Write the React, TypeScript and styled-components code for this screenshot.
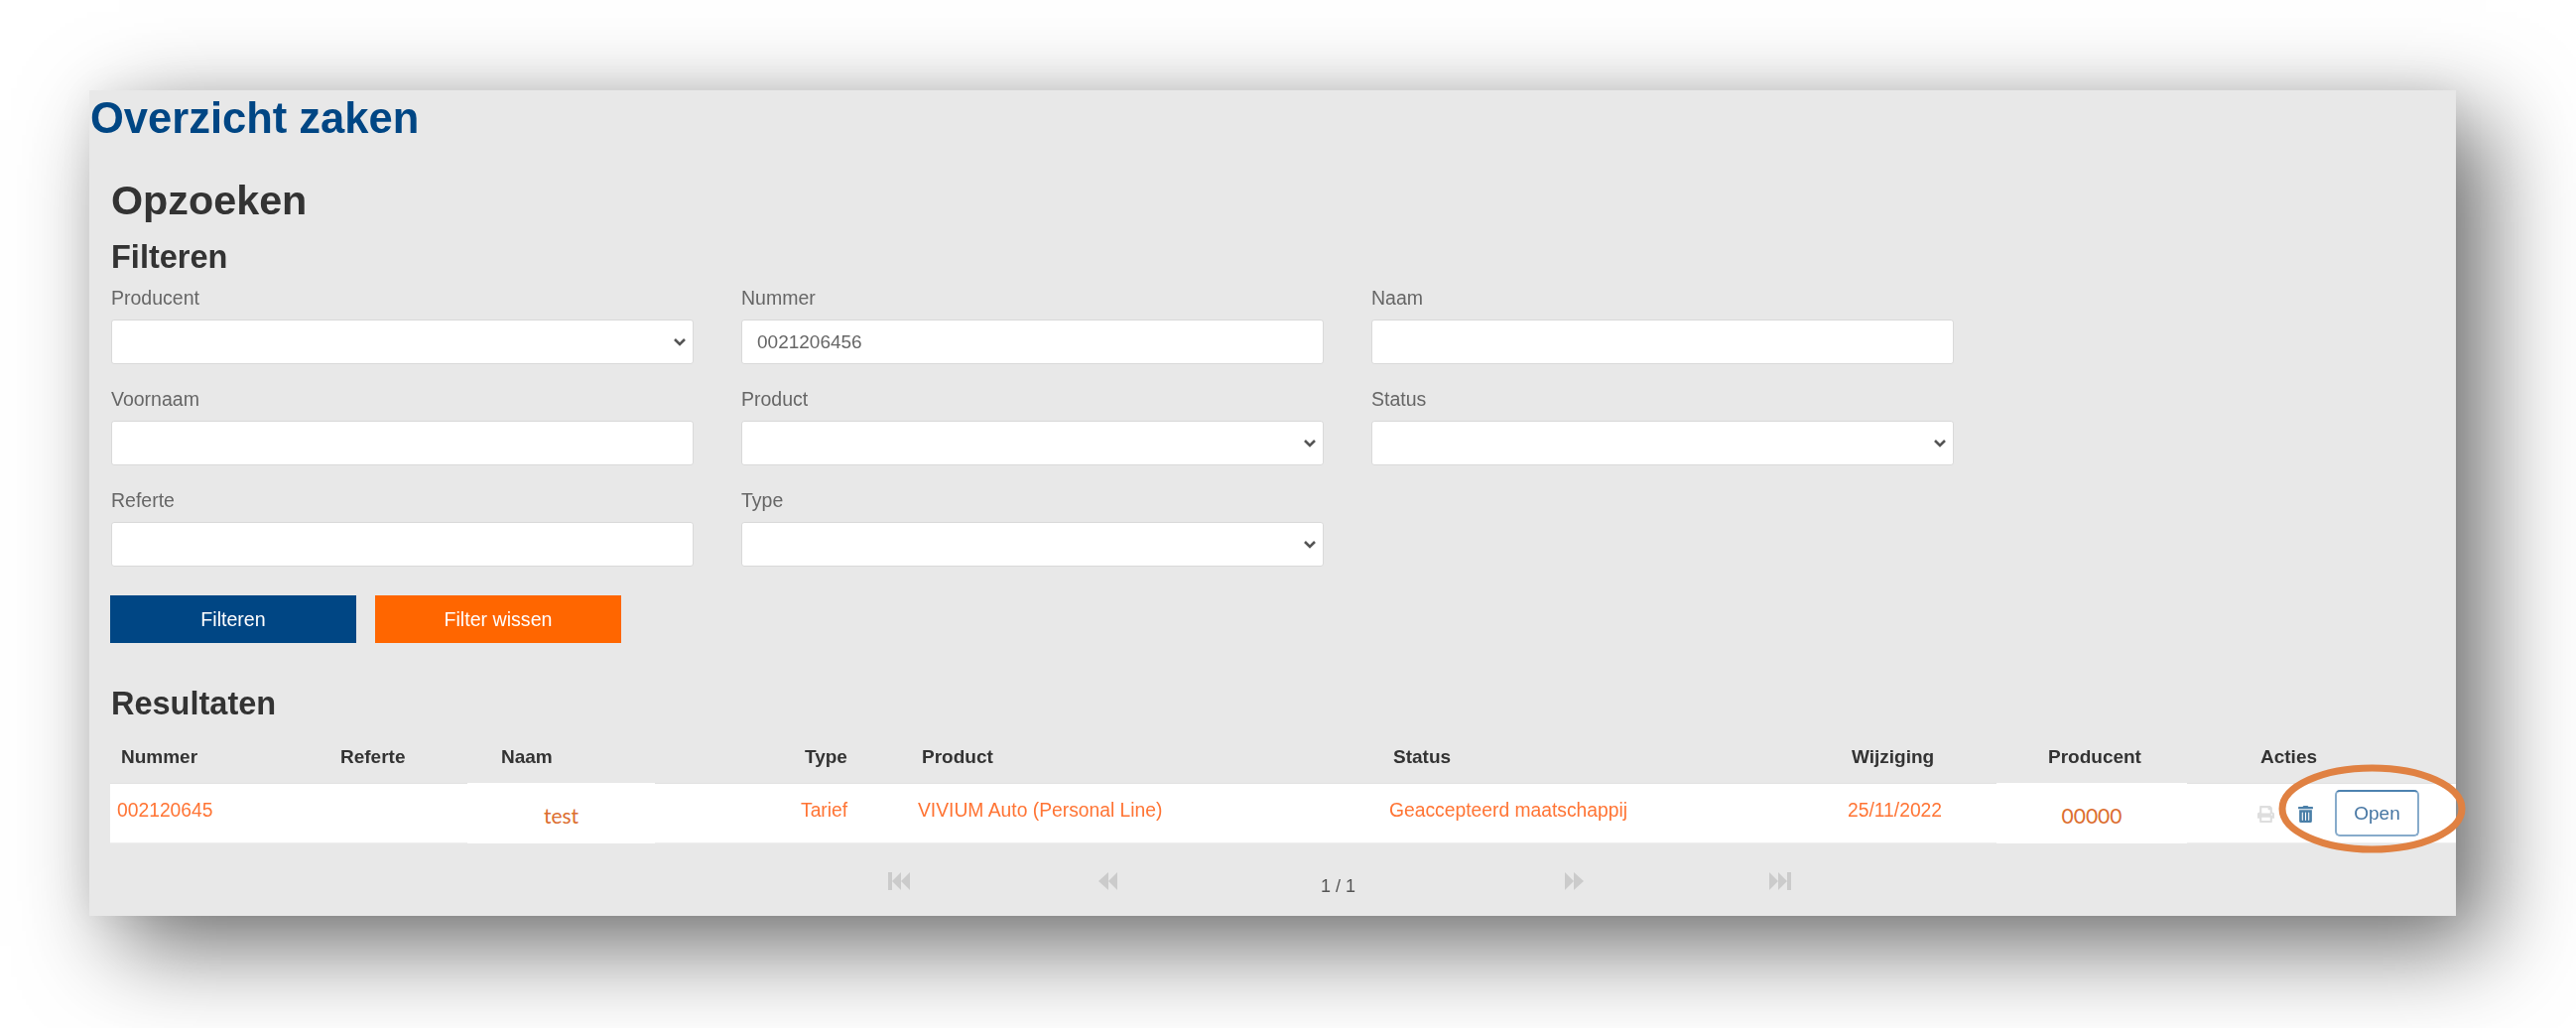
import React from "react";
import styled, { createGlobalStyle, css } from "styled-components";
import { FaPrint, FaTrashAlt } from "react-icons/fa";

const GlobalStyle = createGlobalStyle`
  html, body { margin: 0; padding: 0; background: #fff; }
  body { font-family: "Liberation Sans", Arial, sans-serif; width: 2596px; height: 1036px; overflow: hidden; }
  * { box-sizing: border-box; }
`;

const soft = css`
  filter: blur(0.55px);
`;

const Panel = styled.main`
  position: relative;
  width: 2385px;
  height: 832px;
  margin: 91px 0 0 90px;
  padding: 5px 0 0 1px;
  background: #e8e8e8;
  box-shadow: 30px 30px 90px rgba(0, 0, 0, 0.58), 0 0 34px rgba(0, 0, 0, 0.05);
`;

const Title = styled.h1`
  ${soft}
  margin: 0;
  font-size: 43.5px;
  line-height: 46px;
  font-weight: 700;
  color: #004684;
`;

const Body = styled.div`
  padding-left: 21px;
`;

const PageHeading = styled.h2`
  ${soft}
  margin: 40px 0 0;
  font-size: 41.3px;
  line-height: 41px;
  font-weight: 700;
  color: #333;
`;

const SectionHeading = styled.h3<{ $top: number }>`
  ${soft}
  margin: ${(p) => p.$top}px 0 0;
  font-size: 32.5px;
  line-height: 32px;
  font-weight: 700;
  color: #333;
`;

const FilterGrid = styled.div`
  display: grid;
  grid-template-columns: repeat(3, 587px);
  column-gap: 48px;
  row-gap: 26px;
  margin-top: 16px;
`;

const Field = styled.label`
  display: flex;
  flex-direction: column;
  gap: 12px;
`;

const FieldLabel = styled.span`
  ${soft}
  font-size: 19.5px;
  line-height: 19px;
  color: #666;
`;

const control = css`
  ${soft}
  width: 100%;
  height: 45px;
  padding: 0 15px;
  background-color: #fff;
  border: 1px solid #d9d9d9;
  border-radius: 3px;
  font-family: "Liberation Sans", Arial, sans-serif;
  font-size: 19px;
  color: #666;
  outline: none;
`;

const TextInput = styled.input`
  ${control}
`;

const SelectInput = styled.select`
  ${control}
  appearance: none;
  background-image: url("data:image/svg+xml,%3Csvg xmlns='http://www.w3.org/2000/svg' width='14' height='9' viewBox='0 0 14 9'%3E%3Cpath d='M2 2l5 5 5-5' fill='none' stroke='%23555' stroke-width='2.6'/%3E%3C/svg%3E");
  background-repeat: no-repeat;
  background-position: right 6px center;
`;

const ButtonRow = styled.div`
  display: flex;
  gap: 19px;
  margin: 29px 0 0 -1px;
`;

const FilterButton = styled.button<{ $bg: string }>`
  ${soft}
  width: 248px;
  height: 48px;
  border: 0;
  padding: 0;
  background: ${(p) => p.$bg};
  color: #fff;
  font-family: "Liberation Sans", Arial, sans-serif;
  font-size: 19.6px;
`;

const tableGrid = css`
  display: grid;
  grid-template-columns: 221px 162px 306px 118px 475px 462px 198px 214px 1fr;
  padding-left: 5px;
  margin-left: -1px;
`;

const HeaderRow = styled.div`
  ${tableGrid}
  margin-top: 28px;
`;

const HeaderCell = styled.div`
  ${soft}
  padding-left: 6px;
  font-size: 19px;
  line-height: 19px;
  font-weight: 700;
  color: #333;
`;

const DataRow = styled.div`
  ${tableGrid}
  width: 2364px;
  height: 61px;
  margin-top: 17px;
  background: #fff;
  border-top: 1px solid #e2e2e2;
  border-bottom: 1px solid #eee;
`;

const DataCell = styled.div`
  ${soft}
  padding: 16px 0 0 2px;
  font-size: 19.3px;
  line-height: 22px;
  color: #ff7434;
  white-space: nowrap;
`;

const PastedCell = styled.div<{ $shift: number; $width: number }>`
  margin: -1px 0;
  margin-left: ${(p) => p.$shift}px;
  width: ${(p) => p.$width}px;
  padding-top: 21px;
  background: #fff;
  text-align: center;
  font-family: Lato, "Liberation Sans", sans-serif;
  font-size: 21px;
  line-height: 24px;
  color: #dc6e30;
`;

const ActionCell = styled.div`
  display: flex;
  align-items: center;
  padding-left: 2px;
`;

const PrintIcon = styled(FaPrint)`
  ${soft}
  width: 19px;
  height: 17px;
  color: #dedede;
  margin: 1px 23px 0 0;
`;

const TrashIcon = styled(FaTrashAlt)`
  ${soft}
  width: 15px;
  height: 17px;
  color: #4a7fa8;
  margin: 1px 22px 0 0;
`;

const OpenButton = styled.button`
  ${soft}
  width: 85px;
  height: 47px;
  padding: 0;
  background: #fff;
  border: 2px solid #87abcb;
  border-top-color: #4d82b0;
  border-radius: 5px;
  color: #4676a3;
  font-family: "Liberation Sans", Arial, sans-serif;
  font-size: 19px;
`;

const Pager = styled.nav`
  display: grid;
  grid-template-columns: 210px 226px 245px 207px auto;
  margin: 29px 0 0 783px;
`;

const PagerIcon = styled.svg`
  ${soft}
  display: block;
  height: 18px;
  fill: #cbcbcb;
`;

const PageCount = styled.span`
  ${soft}
  margin-top: 5px;
  font-size: 18px;
  line-height: 18px;
  color: #555;
`;

const Highlight = styled.svg`
  position: absolute;
  left: 2206px;
  top: 679px;
  width: 189px;
  height: 90px;
`;

type PagerKind = "first" | "prev" | "next" | "last";

const PagerGlyph = ({ kind }: { kind: PagerKind }) => {
  const flip = kind === "next" || kind === "last" ? "translate(22 0) scale(-1 1)" : undefined;
  const stepped = kind === "first" || kind === "last";
  return (
    <PagerIcon viewBox="0 0 22 18" width={22}>
      <g transform={flip}>
        {stepped && <rect x="0" y="0" width="4" height="18" />}
        <polygon points={stepped ? "13,0 13,18 4,9" : "12,0 12,18 2,9"} />
        <polygon points={stepped ? "22,0 22,18 13,9" : "21,0 21,18 12,9"} />
      </g>
    </PagerIcon>
  );
};

const filters = [
  { label: "Producent", kind: "select" },
  { label: "Nummer", kind: "input", value: "0021206456" },
  { label: "Naam", kind: "input" },
  { label: "Voornaam", kind: "input" },
  { label: "Product", kind: "select" },
  { label: "Status", kind: "select" },
  { label: "Referte", kind: "input" },
  { label: "Type", kind: "select" },
];

const headers = ["Nummer", "Referte", "Naam", "Type", "Product", "Status", "Wijziging", "Producent", "Acties"];

export default function App() {
  return (
    <>
      <GlobalStyle />
      <Panel>
        <Title>Overzicht zaken</Title>
        <Body>
          <PageHeading>Opzoeken</PageHeading>
          <SectionHeading $top={20}>Filteren</SectionHeading>
          <FilterGrid>
            {filters.map((f) => (
              <Field key={f.label}>
                <FieldLabel>{f.label}</FieldLabel>
                {f.kind === "select" ? (
                  <SelectInput defaultValue="">
                    <option value="" />
                  </SelectInput>
                ) : (
                  <TextInput defaultValue={f.value ?? ""} />
                )}
              </Field>
            ))}
          </FilterGrid>
          <ButtonRow>
            <FilterButton $bg="#004684">Filteren</FilterButton>
            <FilterButton $bg="#ff6600">Filter wissen</FilterButton>
          </ButtonRow>
          <SectionHeading $top={45}>Resultaten</SectionHeading>
          <HeaderRow>
            {headers.map((h) => (
              <HeaderCell key={h}>{h}</HeaderCell>
            ))}
          </HeaderRow>
          <DataRow>
            <DataCell>002120645</DataCell>
            <DataCell />
            <PastedCell $shift={-28} $width={189}>test</PastedCell>
            <DataCell>Tarief</DataCell>
            <DataCell>VIVIUM Auto (Personal Line)</DataCell>
            <DataCell>Geaccepteerd maatschappij</DataCell>
            <DataCell>25/11/2022</DataCell>
            <PastedCell $shift={-46} $width={192}>00000</PastedCell>
            <ActionCell>
              <PrintIcon />
              <TrashIcon />
              <OpenButton>Open</OpenButton>
            </ActionCell>
          </DataRow>
          <Pager>
            <PagerGlyph kind="first" />
            <PagerGlyph kind="prev" />
            <PageCount>1 / 1</PageCount>
            <PagerGlyph kind="next" />
            <PagerGlyph kind="last" />
          </Pager>
        </Body>
        <Highlight viewBox="0 0 189 90">
          <ellipse cx="94.5" cy="45" rx="90.5" ry="41" fill="none" stroke="#e08142" strokeWidth="7" />
        </Highlight>
      </Panel>
    </>
  );
}
